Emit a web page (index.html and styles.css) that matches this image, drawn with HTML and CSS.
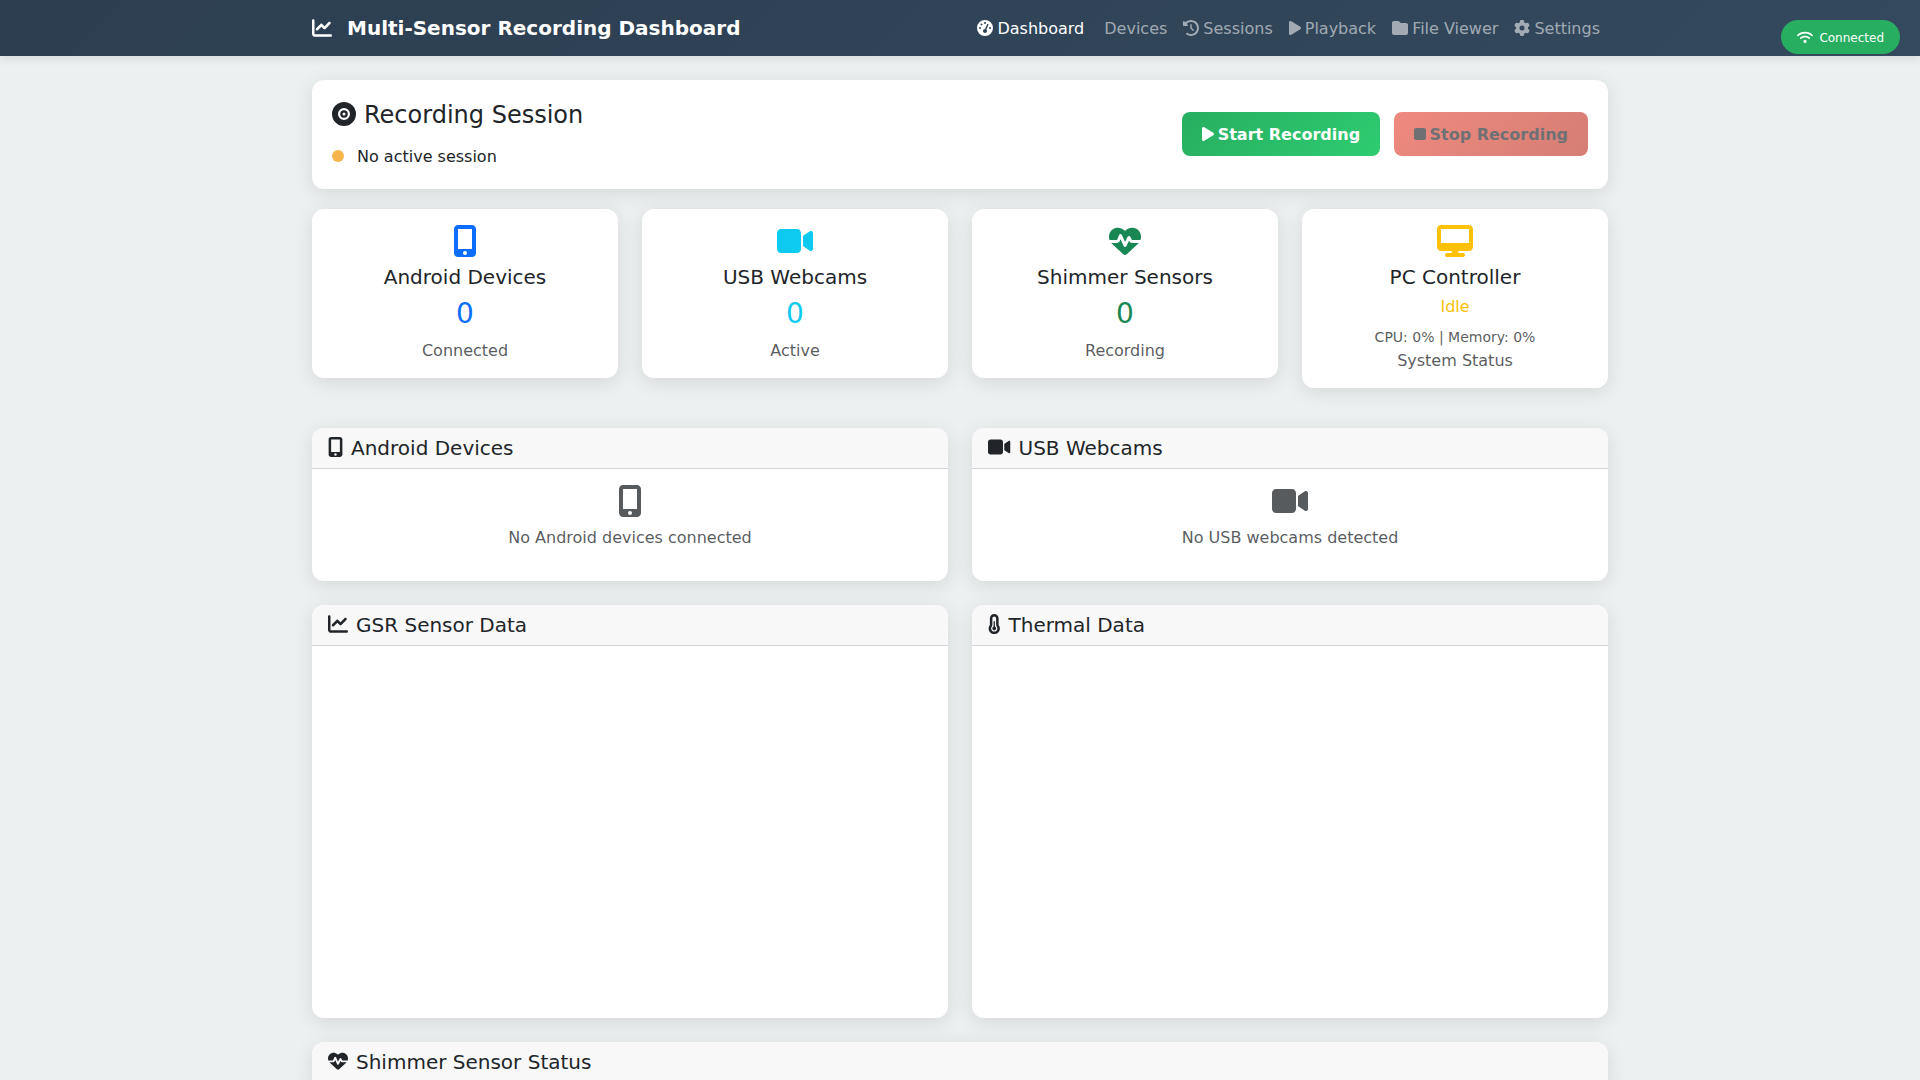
FILE: index.html
```html
<!DOCTYPE html>
<html lang="en">
<head>
<meta charset="utf-8">
<title>Multi-Sensor Recording Dashboard</title>
<link rel="stylesheet" href="styles.css">
</head>
<body>
<svg class="defs" aria-hidden="true">
  <symbol id="i-mobile" viewBox="0 0 384 512"><path d="M16 64C16 28.7 44.7 0 80 0H304c35.3 0 64 28.7 64 64V448c0 35.3-28.7 64-64 64H80c-35.3 0-64-28.7-64-64V64zM224 448a32 32 0 1 0 -64 0 32 32 0 1 0 64 0zM304 64H80V384H304V64z"/></symbol>
  <symbol id="i-video" viewBox="0 0 576 512"><path d="M0 128C0 92.7 28.7 64 64 64H320c35.3 0 64 28.7 64 64V384c0 35.3-28.7 64-64 64H64c-35.3 0-64-28.7-64-64V128zM559.1 99.8c10.4 5.6 16.9 16.4 16.9 28.2V384c0 11.8-6.5 22.6-16.9 28.2s-23 5-32.9-1.6l-96-64L416 337.1V320 192 174.9l14.2-9.5 96-64c9.8-6.5 22.4-7.2 32.9-1.6z"/></symbol>
  <symbol id="i-heart" viewBox="0 0 512 512"><path d="M228.3 469.1L47.6 300.4c-4.2-3.9-8.2-8.1-11.9-12.4h87c22.6 0 43-13.6 51.7-34.5l10.5-25.2 49.3 109.5c3.8 8.5 12.1 14 21.4 14.1s17.8-5 22-13.3L320 253.7l1.7 3.4c9.5 19 28.9 31 50.1 31H476.3c-3.7 4.3-7.7 8.5-11.9 12.4L283.7 469.1c-7.5 7-17.4 10.9-27.7 10.9s-20.2-3.9-27.7-10.9zM503.7 240h-132c-3 0-5.8-1.7-7.2-4.4l-23.2-46.3c-4.1-8.1-12.4-13.3-21.5-13.3s-17.4 5.1-21.5 13.3l-41.4 82.8L205.9 158.2c-3.9-8.7-12.7-14.3-22.2-14.1s-18.1 5.9-21.8 14.8l-31.8 76.3c-1.2 3-4.2 4.9-7.4 4.9H16c-2.6 0-5 .4-7.3 1.1C3 225.2 0 208.2 0 190.9v-5.8c0-69.9 50.5-129.5 119.4-141C165 36.5 211.4 51.4 244 84l12 12 12-12c32.6-32.6 79-47.5 124.6-39.9C461.5 55.6 512 115.2 512 185.1v5.8c0 16.9-2.8 33.5-8.3 49.1z"/></symbol>
  <symbol id="i-desktop" viewBox="0 0 576 512"><path d="M64 0C28.7 0 0 28.7 0 64V352c0 35.3 28.7 64 64 64H240l-10.7 32H160c-17.7 0-32 14.3-32 32s14.3 32 32 32H416c17.7 0 32-14.3 32-32s-14.3-32-32-32H346.7L336 416H512c35.3 0 64-28.7 64-64V64c0-35.3-28.7-64-64-64H64zM512 64V288H64V64H512z"/></symbol>
  <symbol id="i-chart" viewBox="0 0 512 512"><path d="M64 64c0-17.7-14.3-32-32-32S0 46.3 0 64V400c0 44.2 35.8 80 80 80H480c17.7 0 32-14.3 32-32s-14.3-32-32-32H80c-8.8 0-16-7.2-16-16V64zm406.6 86.6c12.5-12.5 12.5-32.8 0-45.3s-32.8-12.5-45.3 0L320 210.7l-57.4-57.4c-12.5-12.5-32.8-12.5-45.3 0l-112 112c-12.5 12.5-12.5 32.8 0 45.3s32.8 12.5 45.3 0L240 221.3l57.4 57.4c12.5 12.5 32.8 12.5 45.3 0l128-128z"/></symbol>
  <symbol id="i-gauge" viewBox="0 0 512 512"><path d="M0 256a256 256 0 1 1 512 0A256 256 0 1 1 0 256zM288 96a32 32 0 1 0 -64 0 32 32 0 1 0 64 0zM256 416c35.3 0 64-28.7 64-64c0-17.4-6.9-33.1-18.1-44.6L366 161.7c5.3-12.1-.2-26.3-12.3-31.6s-26.3 .2-31.6 12.3L257.9 288c-.6 0-1.3 0-1.9 0c-35.3 0-64 28.7-64 64s28.7 64 64 64zM176 144a32 32 0 1 0 -64 0 32 32 0 1 0 64 0zM96 288a32 32 0 1 0 0-64 32 32 0 1 0 0 64zm352-32a32 32 0 1 0 -64 0 32 32 0 1 0 64 0z"/></symbol>
  <symbol id="i-history" viewBox="0 0 512 512"><path d="M75 75L41 41C25.9 25.9 0 36.6 0 57.9V168c0 13.3 10.7 24 24 24H134.1c21.4 0 32.1-25.9 17-41l-30.8-30.8C155 85.5 203 64 256 64c106 0 192 86 192 192s-86 192-192 192c-40.8 0-78.6-12.7-109.7-34.4c-14.5-10.1-34.4-6.6-44.6 7.9s-6.6 34.4 7.9 44.6C151.2 495 201.7 512 256 512c141.4 0 256-114.6 256-256S397.4 0 256 0C185.3 0 121.3 28.7 75 75zm181 53c-13.3 0-24 10.7-24 24V256c0 6.4 2.5 12.5 7 17l72 72c9.4 9.4 24.6 9.4 33.9 0s9.4-24.6 0-33.9l-65-65V152c0-13.3-10.7-24-24-24z"/></symbol>
  <symbol id="i-play" viewBox="0 0 384 512"><path d="M73 39c-14.8-9.1-33.4-9.4-48.5-.9S0 62.6 0 80V432c0 17.4 9.4 33.4 24.5 41.9s33.7 8.1 48.5-.9L361 297c14.3-8.7 23-24.2 23-41s-8.7-32.2-23-41L73 39z"/></symbol>
  <symbol id="i-folder" viewBox="0 0 512 512"><path d="M64 480H448c35.3 0 64-28.7 64-64V160c0-35.3-28.7-64-64-64H288c-10.1 0-19.6-4.7-25.6-12.8L243.2 57.6C231.1 41.5 212.1 32 192 32H64C28.7 32 0 60.7 0 96V416c0 35.3 28.7 64 64 64z"/></symbol>
  <symbol id="i-gear" viewBox="0 0 512 512"><path d="M495.9 166.6c3.2 8.7 .5 18.4-6.4 24.6l-43.3 39.4c1.1 8.3 1.7 16.8 1.7 25.4s-.6 17.1-1.7 25.4l43.3 39.4c6.9 6.2 9.6 15.9 6.4 24.6c-4.4 11.9-9.7 23.3-15.8 34.3l-4.7 8.1c-6.6 11-14 21.4-22.1 31.2c-5.9 7.2-15.7 9.6-24.5 6.8l-55.7-17.7c-13.4 10.3-28.2 18.9-44 25.4l-12.5 57.1c-2 9.1-9 16.3-18.2 17.8c-13.8 2.3-28 3.5-42.5 3.5s-28.7-1.2-42.5-3.5c-9.2-1.5-16.2-8.7-18.2-17.8l-12.5-57.1c-15.8-6.5-30.6-15.1-44-25.4L83.1 425.9c-8.8 2.8-18.6 .3-24.5-6.8c-8.1-9.8-15.5-20.2-22.1-31.2l-4.7-8.1c-6.1-11-11.4-22.4-15.8-34.3c-3.2-8.7-.5-18.4 6.4-24.6l43.3-39.4C64.6 273.1 64 264.6 64 256s.6-17.1 1.7-25.4L22.4 191.2c-6.9-6.2-9.6-15.9-6.4-24.6c4.4-11.9 9.7-23.3 15.8-34.3l4.7-8.1c6.6-11 14-21.4 22.1-31.2c5.9-7.2 15.7-9.6 24.5-6.8l55.7 17.7c13.4-10.3 28.2-18.9 44-25.4l12.5-57.1c2-9.1 9-16.3 18.2-17.8C227.3 1.2 241.5 0 256 0s28.7 1.2 42.5 3.5c9.2 1.5 16.2 8.7 18.2 17.8l12.5 57.1c15.8 6.5 30.6 15.1 44 25.4l55.7-17.7c8.8-2.8 18.6-.3 24.5 6.8c8.1 9.8 15.5 20.2 22.1 31.2l4.7 8.1c6.1 11 11.4 22.4 15.8 34.3zM256 336a80 80 0 1 0 0-160 80 80 0 1 0 0 160z"/></symbol>
  <symbol id="i-stop" viewBox="0 0 384 512"><path d="M0 128C0 92.7 28.7 64 64 64H320c35.3 0 64 28.7 64 64V384c0 35.3-28.7 64-64 64H64c-35.3 0-64-28.7-64-64V128z"/></symbol>
  <symbol id="i-wifi" viewBox="0 0 640 512"><path d="M54.2 202.9C123.2 136.7 216.8 96 320 96s196.8 40.7 265.8 106.9c12.8 12.2 33 11.8 45.2-.9s11.8-33-.9-45.2C549.7 79.5 440.4 32 320 32S90.3 79.5 9.8 156.7C-2.9 169-3.3 189.2 8.9 202s32.5 13.2 45.2 .9zM320 256c56.8 0 108.6 21.1 148.2 56c13.3 11.7 33.5 10.4 45.2-2.8s10.4-33.5-2.8-45.2C459.8 219.2 393 192 320 192s-139.8 27.2-190.5 72c-13.3 11.7-14.5 31.9-2.8 45.2s31.9 14.5 45.2 2.8c39.5-34.9 91.3-56 148.2-56zm64 160a64 64 0 1 0 -128 0 64 64 0 1 0 128 0z"/></symbol>
  <symbol id="i-vinyl" viewBox="0 0 512 512"><path fill-rule="evenodd" d="M0 256a256 256 0 1 1 512 0A256 256 0 1 1 0 256zM128 256a128 128 0 1 0 256 0a128 128 0 1 0 -256 0zM176 256a80 80 0 1 0 160 0a80 80 0 1 0 -160 0zM224 256a32 32 0 1 0 64 0a32 32 0 1 0 -64 0z"/></symbol>
  <symbol id="i-temp" viewBox="0 0 320 512"><path d="M160 64c-26.5 0-48 21.5-48 48V276.5c0 17.3-7.1 31.9-15.3 42.5C86.2 332.6 80 349.5 80 368c0 44.2 35.8 80 80 80s80-35.8 80-80c0-18.5-6.2-35.4-16.7-48.9c-8.2-10.6-15.3-25.2-15.3-42.5V112c0-26.5-21.5-48-48-48zM48 112C48 50.2 98.1 0 160 0s112 50.1 112 112V276.5c0 6.9 2.9 13.5 7.1 18.9C296.1 316.9 304 341.5 304 368c0 79.5-64.5 144-144 144S16 447.5 16 368c0-26.5 7.9-51.1 24.9-72.6 4.2-5.4 7.1-12 7.1-18.9V112zM160 416c-26.5 0-48-21.5-48-48 0-20.9 13.4-38.7 32-45.3V192c0-8.8 7.2-16 16-16s16 7.2 16 16V322.7c18.6 6.6 32 24.4 32 45.3 0 26.5-21.5 48-48 48z"/></symbol>
</svg>

<header class="navbar">
  <div class="container nav-inner">
    <a class="brand" href="#"><svg class="ic ic-1 brand-ic"><use href="#i-chart"/></svg>Multi-Sensor Recording Dashboard</a>
    <nav class="nav-links">
      <a class="nav-link active" href="#"><svg class="ic ic-1"><use href="#i-gauge"/></svg>Dashboard</a>
      <a class="nav-link no-icon" href="#">Devices</a>
      <a class="nav-link" href="#"><svg class="ic ic-1"><use href="#i-history"/></svg>Sessions</a>
      <a class="nav-link" href="#"><svg class="ic ic-75"><use href="#i-play"/></svg>Playback</a>
      <a class="nav-link" href="#"><svg class="ic ic-1"><use href="#i-folder"/></svg>File Viewer</a>
      <a class="nav-link" href="#"><svg class="ic ic-1"><use href="#i-gear"/></svg>Settings</a>
    </nav>
  </div>
</header>

<div class="conn-badge"><svg class="ic ic-125 conn-ic"><use href="#i-wifi"/></svg>Connected</div>

<main class="container main">
  <section class="card session">
    <div>
      <h4 class="session-title"><svg class="ic ic-1"><use href="#i-vinyl"/></svg>Recording Session</h4>
      <div class="session-status"><span class="dot"></span>No active session</div>
    </div>
    <div class="session-actions">
      <button class="btn btn-start" type="button"><svg class="ic ic-75"><use href="#i-play"/></svg>Start Recording</button>
      <button class="btn btn-stop" type="button" disabled><svg class="ic ic-75"><use href="#i-stop"/></svg>Stop Recording</button>
    </div>
  </section>

  <section class="stats">
    <div class="card stat">
      <svg class="ic stat-ic ic-75 blue"><use href="#i-mobile"/></svg>
      <h5 class="stat-title">Android Devices</h5>
      <h3 class="stat-value blue">0</h3>
      <p class="muted">Connected</p>
    </div>
    <div class="card stat">
      <svg class="ic stat-ic ic-1125 cyan"><use href="#i-video"/></svg>
      <h5 class="stat-title">USB Webcams</h5>
      <h3 class="stat-value cyan">0</h3>
      <p class="muted">Active</p>
    </div>
    <div class="card stat">
      <svg class="ic stat-ic ic-1 green"><use href="#i-heart"/></svg>
      <h5 class="stat-title">Shimmer Sensors</h5>
      <h3 class="stat-value green">0</h3>
      <p class="muted">Recording</p>
    </div>
    <div class="card stat">
      <svg class="ic stat-ic ic-1125 yellow"><use href="#i-desktop"/></svg>
      <h5 class="stat-title">PC Controller</h5>
      <h6 class="stat-state yellow">Idle</h6>
      <div class="stat-meta"><small class="muted">CPU: 0% | Memory: 0%</small></div>
      <p class="muted">System Status</p>
    </div>
  </section>

  <section class="panels">
    <div class="card panel">
      <div class="panel-head"><h5><svg class="ic ic-75"><use href="#i-mobile"/></svg>Android Devices</h5></div>
      <div class="panel-body empty">
        <svg class="ic empty-ic ic-75"><use href="#i-mobile"/></svg>
        <p class="muted">No Android devices connected</p>
      </div>
    </div>
    <div class="card panel">
      <div class="panel-head"><h5><svg class="ic ic-1125"><use href="#i-video"/></svg>USB Webcams</h5></div>
      <div class="panel-body empty">
        <svg class="ic empty-ic ic-1125"><use href="#i-video"/></svg>
        <p class="muted">No USB webcams detected</p>
      </div>
    </div>
    <div class="card panel">
      <div class="panel-head"><h5><svg class="ic ic-1"><use href="#i-chart"/></svg>GSR Sensor Data</h5></div>
      <div class="chart-area"></div>
    </div>
    <div class="card panel">
      <div class="panel-head"><h5><svg class="ic ic-625"><use href="#i-temp"/></svg>Thermal Data</h5></div>
      <div class="chart-area"></div>
    </div>
    <div class="card panel panel-wide">
      <div class="panel-head"><h5><svg class="ic ic-1"><use href="#i-heart"/></svg>Shimmer Sensor Status</h5></div>
      <div class="panel-body"></div>
    </div>
  </section>
</main>
</body>
</html>
```
FILE: styles.css
```css
* { box-sizing: border-box; }
html, body { margin: 0; padding: 0; }
body {
  background: #ecf0f1;
  color: #212529;
  font-family: "DejaVu Sans", sans-serif;
  font-size: 16px;
  line-height: 1.5;
}
h3, h4, h5, h6, p { margin: 0; font-weight: 400; line-height: 1.2; }
a { text-decoration: none; color: inherit; }

.defs { display: none; }
.ic { display: inline-block; height: 1em; fill: currentColor; vertical-align: -0.125em; overflow: visible; }
.ic-625 { width: 0.625em; }
.ic-75 { width: 0.75em; }
.ic-1 { width: 1em; }
.ic-1125 { width: 1.125em; }
.ic-125 { width: 1.25em; }

.container { width: 1296px; margin: 0 auto; }

.navbar {
  height: 56px;
  background: linear-gradient(135deg, #2c3e50, #34495e);
  box-shadow: 0 2px 10px rgba(0, 0, 0, 0.1);
}
.nav-inner { height: 100%; display: flex; align-items: center; justify-content: space-between; }
.brand { color: #fff; font-size: 20px; font-weight: 700; display: flex; align-items: center; }
.brand-ic { margin-right: 15px; }
.nav-links { display: flex; }
.nav-link { padding: 9px 8px 7px; color: rgba(255, 255, 255, 0.55); }
.nav-link .ic { margin-right: 4px; }
.nav-link.active { color: #fff; }
.nav-link.no-icon { padding-left: 12px; }

.conn-badge {
  position: fixed;
  top: 20px;
  right: 20px;
  height: 34px;
  display: flex;
  align-items: center;
  padding: 2px 16px 0;
  border-radius: 20px;
  background: #27ae60;
  color: #fff;
  font-size: 12px;
}
.conn-ic { font-size: 12.8px; margin-right: 6px; margin-top: -2px; }

.main { padding-top: 24px; padding-bottom: 24px; }

.card {
  background: #fff;
  border-radius: 12px;
  box-shadow: 0 4px 20px rgba(0, 0, 0, 0.1);
  overflow: hidden;
}

.session {
  display: flex;
  justify-content: space-between;
  align-items: center;
  padding: 20px;
  margin-bottom: 20px;
}
.session-title { font-size: 24px; padding-top: 1px; margin-bottom: 15px; }
.session-title .ic { margin-right: 8px; }
.session-status { display: flex; align-items: center; }
.dot { width: 12px; height: 12px; border-radius: 50%; background: #f39c12; opacity: 0.75; margin: 0 13px 2px 0; }
.session-actions { display: flex; gap: 14px; }

.btn {
  border: 0;
  border-radius: 8px;
  padding: 11px 20px 9px;
  font: 700 16px/24px "DejaVu Sans", sans-serif;
  color: #fff;
}
.btn .ic { margin-right: 3.4px; }
.btn-start { background: linear-gradient(135deg, #27ae60, #2ecc71); }
.btn-stop { background: linear-gradient(135deg, #e74c3c, #c0392b); color: #212529; opacity: 0.65; }

.stats {
  display: grid;
  grid-template-columns: repeat(4, 1fr);
  gap: 24px;
  align-items: start;
  margin-bottom: 40px;
}
.stat { padding: 16px 16px 15px; text-align: center; }
.stat-ic { font-size: 32px; display: block; margin: 0 auto 8px; }
.stat-title { font-size: 20px; margin-bottom: 8px; }
.stat-value { font-size: 28px; margin-bottom: 9px; }
.stat-state { font-size: 16px; margin-bottom: 9px; }
.stat-meta { line-height: 24px; }
.stat-meta small { font-size: 14px; }
.stat p { line-height: 24px; }

.muted { color: rgba(33, 37, 41, 0.75); }
.blue { color: #0d6efd; }
.cyan { color: #0dcaf0; }
.green { color: #198754; }
.yellow { color: #ffc107; }

.panels { display: grid; grid-template-columns: 1fr 1fr; gap: 24px; }
.panel-wide { grid-column: 1 / -1; }
.panel-head {
  padding: 8px 16px;
  background: #f8f8f8;
  border-bottom: 1px solid #d3d5d6;
}
.panel-head h5 { font-size: 20px; }
.panel-head .ic { margin-right: 8px; }
.panel-body { padding: 16px; min-height: 112px; }
.empty { text-align: center; }
.empty-ic { font-size: 32px; display: block; margin: 0 auto 9px; color: #212529; opacity: 0.75; }
.empty p { line-height: 24px; margin-bottom: 15px; }
.chart-area { height: 372px; }
```
